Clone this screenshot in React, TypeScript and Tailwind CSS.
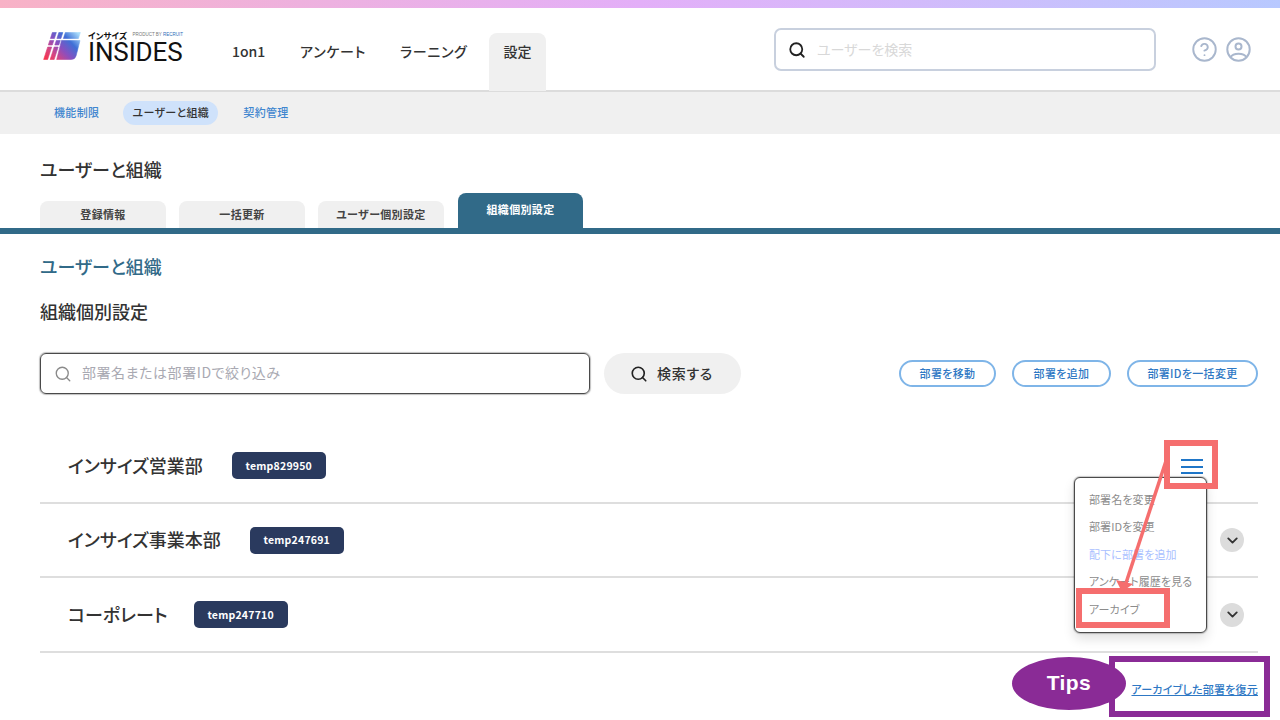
import React from "react";
import { Search, CircleHelp, ChevronDown } from "lucide-react";

const JP = "font-['Noto_Sans_CJK_JP','Noto_Sans',sans-serif] [font-feature-settings:'palt']";

function Logo() {
  const sl = (y: number) => 9 * (1 - y / 28);
  const quad = (a: number, b: number, y1: number, y2: number) =>
    `${a + sl(y1)},${y1} ${b + sl(y1)},${y1} ${b + sl(y2)},${y2} ${a + sl(y2)},${y2}`;
  return (
    <svg width="38" height="28" viewBox="0 0 38 28" className="shrink-0 mt-[1px]">
      <defs>
        <linearGradient id="lg" gradientUnits="userSpaceOnUse" x1="34" y1="0" x2="4" y2="28">
          <stop offset="0" stopColor="#a9dcfb" />
          <stop offset="0.28" stopColor="#3f6fd6" />
          <stop offset="0.55" stopColor="#8a4fbf" />
          <stop offset="0.8" stopColor="#d8457f" />
          <stop offset="1" stopColor="#f4344f" />
        </linearGradient>
      </defs>
      <g fill="url(#lg)" stroke="url(#lg)" strokeWidth="0.6" strokeLinejoin="round">
        <polygon points={quad(0.5, 4.5, 0.5, 6.5)} />
        <polygon points={quad(7, 11, 0.5, 6.5)} />
        <polygon points={quad(13.5, 28.5, 0.5, 6.5)} />
        <polygon points={quad(0.5, 4.5, 8.5, 13)} />
        <polygon points={quad(7, 11, 8.5, 13)} />
        <polygon points={quad(0.5, 4.5, 15, 27.5)} />
        <polygon points={quad(7, 11, 15, 27.5)} />
        <path d="M 18.5 8.5 L 37 8.5 L 33 24 Q 32 27.5 28 27.5 L 13.7 27.5 Z" />
      </g>
    </svg>
  );
}

function UserIcon() {
  return (
    <svg width="25" height="25" viewBox="0 0 25 25" fill="none" stroke="#a9b7cd" strokeWidth="2">
      <circle cx="12.5" cy="12.5" r="11.2" />
      <circle cx="12.5" cy="9.5" r="3" />
      <path d="M4.8 20 C 7 15.5, 18 15.5, 20.2 20" />
    </svg>
  );
}

function NavItem({ label, active, w }: { label: string; active?: boolean; w?: string }) {
  return (
    <div
      className={`flex whitespace-nowrap text-[14px] leading-[22px] font-medium text-[#333] h-[58px] pt-[7px] self-end ${
        active ? "w-[57px] justify-center bg-[#f0f0f0] rounded-t-[8px] ml-[-12px]" : w ?? ""
      }`}
    >
      {label}
    </div>
  );
}

function Tab({ label, active }: { label: string; active?: boolean }) {
  return (
    <div
      className={`flex items-center justify-center rounded-t-[8px] text-[11px] font-bold tracking-[0.03em] ${
        active ? "w-[125px] h-[35px] bg-[#316a88] text-white ml-[1px] pb-[3px]" : "w-[126px] h-[27px] bg-[#f0f0f0] text-[#444]"
      }`}
    >
      {label}
    </div>
  );
}

function Pill({ label, w }: { label: string; w: string }) {
  return (
    <div
      className={`${w} h-[27px] flex items-center justify-center rounded-full border-2 border-[#7fb5e8] bg-white text-[#2e78c4] text-[11px] font-medium tracking-[0.03em] pb-[1px]`}
    >
      {label}
    </div>
  );
}

function Row({ name, id, chevron, h, gap }: { name: string; id: string; chevron?: boolean; h: string; gap: string }) {
  return (
    <div className={`${h} border-b-2 border-[#dedede] flex items-center pl-[28px] pr-[14px]`}>
      <span className="text-[18px] leading-[26px] font-medium text-[#333] pb-[2px]">{name}</span>
      <span className={`${gap} w-[94px] h-[27px] flex items-center justify-center rounded-[5px] bg-[#2a3a5e] text-white text-[10.5px] font-bold tracking-[0.02em]`}>
        {id}
      </span>
      {chevron && (
        <span className="ml-auto w-[24px] h-[24px] rounded-full bg-[#dcdcdc] flex items-center justify-center">
          <ChevronDown size={17} strokeWidth={2.6} color="#333" />
        </span>
      )}
    </div>
  );
}

export default function App() {
  return (
    <div className={`relative w-[1280px] h-[720px] overflow-hidden bg-white ${JP}`}>
      <div className="h-[8px] bg-gradient-to-r from-[#f8b2c6] via-[#e3aff8] to-[#b8c9ff]" />

      <header className="h-[84px] border-b-2 border-[#dcdcdc] flex items-start pl-[43px]">
        <div className="flex items-start mt-[23px] gap-[7px]">
          <Logo />
          <div className="flex flex-col w-[96px]">
            <div className="flex items-center justify-between h-[9px]">
              <span className="text-[8.5px] font-bold text-[#111] leading-none">インサイズ</span>
              <span className="text-[4.5px] text-[#777] leading-none font-['Liberation_Sans',sans-serif] whitespace-nowrap mr-[1px]">
                PRODUCT BY <span className="text-[#2b6cb8]">RECRUIT</span>
              </span>
            </div>
            <span className="text-[26px] leading-[21px] mt-[2px] text-[#111] font-['Roboto',sans-serif] tracking-[-0.005em]">INSIDES</span>
          </div>
        </div>
        <nav className="flex h-[83px] gap-[34px] ml-[48px]">
          <NavItem label="1on1" w="w-[34px]" />
          <NavItem label="アンケート" w="w-[66px] tracking-[0.05em]" />
          <NavItem label="ラーニング" w="w-[67px] tracking-[0.05em]" />
          <NavItem label="設定" active />
        </nav>
        <div className="ml-[228px] mt-[20px] w-[382px] h-[43px] rounded-[7px] border-2 border-[#c8d0de] flex items-center pl-[12px] gap-[11px]">
          <Search size={18} strokeWidth={2.4} color="#222" />
          <span className="text-[14px] text-[#d8d8d8] pb-[1px]">ユーザーを検索</span>
        </div>
        <div className="flex items-center ml-[35px] mt-[28px] gap-[8px]">
          <CircleHelp size={27} strokeWidth={1.7} color="#a9b7cd" />
          <UserIcon />
        </div>
      </header>

      <div className="h-[42px] bg-[#f0f0f0] flex items-center pl-[54px] pb-[1px] text-[11px] font-medium tracking-[0.03em]">
        <span className="text-[#3f86cf]">機能制限</span>
        <span className="ml-[24px] w-[95px] h-[24px] rounded-full bg-[#cfe2fb] text-[#333] flex items-center justify-center">
          ユーザーと組織
        </span>
        <span className="ml-[25px] text-[#3f86cf]">契約管理</span>
      </div>

      <div className="h-[59px] pl-[40px] pt-[22px] text-[18px] leading-[26px] font-medium text-[#333]">ユーザーと組織</div>

      <div className="flex items-end gap-[13px] pl-[40px] border-b-[6px] border-[#316a88]">
        <Tab label="登録情報" />
        <Tab label="一括更新" />
        <Tab label="ユーザー個別設定" />
        <Tab label="組織個別設定" active />
      </div>

      <div className="px-[40px] pr-[22px]">
        <div className="pt-[19px] text-[18px] leading-[26px] font-medium text-[#316a88]">ユーザーと組織</div>
        <div className="pt-[19px] text-[18px] leading-[26px] font-medium text-[#333]">組織個別設定</div>

        <div className="flex items-center mt-[29px]">
          <div className="w-[550px] h-[41px] rounded-[6px] border border-[#4a4a4a] shadow-[0_0_1px_1px_rgba(0,0,0,0.25)] flex items-center pl-[13px] gap-[10px]">
            <Search size={18} strokeWidth={1.8} color="#8a8a8a" />
            <span className="text-[14px] tracking-[0.04em] text-[#a9a9b2] pb-[2px]">部署名または部署IDで絞り込み</span>
          </div>
          <div className="ml-[14px] w-[137px] h-[41px] rounded-full bg-[#f0f0f0] flex items-center justify-center gap-[9px] text-[14px] font-medium text-[#333] tracking-[0.05em] pr-[2px]">
            <Search size={18} strokeWidth={2.2} color="#222" />
            <span className="pb-[1px]">検索する</span>
          </div>
          <div className="ml-auto flex gap-[16px]">
            <Pill label="部署を移動" w="w-[97px]" />
            <Pill label="部署を追加" w="w-[99px]" />
            <Pill label="部署IDを一括変更" w="w-[131px]" />
          </div>
        </div>

        <div className="mt-[35px]">
          <Row name="インサイズ営業部" id="temp829950" h="h-[75px]" gap="ml-[29px]" />
          <Row name="インサイズ事業本部" id="temp247691" chevron h="h-[74px]" gap="ml-[29px]" />
          <Row name="コーポレート" id="temp247710" chevron h="h-[75px]" gap="ml-[26px]" />
        </div>
      </div>

      {/* hamburger */}
      <div className="absolute left-[1181px] top-[459px] w-[22px] h-[15px] flex flex-col justify-between">
        <span className="h-[2px] bg-[#1f76c8]" />
        <span className="h-[2px] bg-[#1f76c8]" />
        <span className="h-[2px] bg-[#1f76c8]" />
      </div>

      {/* menu */}
      <div className="absolute left-[1074px] top-[477px] w-[133px] h-[156px] bg-white rounded-[6px] border border-[#4a4a4a] shadow-[0_0_1px_1px_rgba(0,0,0,0.2),0_6px_12px_rgba(0,0,0,0.12)] flex flex-col pl-[14px] pt-[7px] text-[11px] text-[#8c8c8c] tracking-[0.01em]">
        <div className="h-[27.5px] flex items-center">部署名を変更</div>
        <div className="h-[27.5px] flex items-center">部署IDを変更</div>
        <div className="h-[27.5px] flex items-center text-[#a9c0ff]">配下に部署を追加</div>
        <div className="h-[27.5px] flex items-center">アンケート履歴を見る</div>
        <div className="h-[27.5px] flex items-center">アーカイブ</div>
      </div>

      {/* annotations */}
      <div className="absolute left-[1164px] top-[440px] w-[54px] h-[49px] border-[6px] border-[#f56e6e]" />
      <div className="absolute left-[1076px] top-[588px] w-[94px] h-[40px] border-[6px] border-[#f56e6e]" />
      <svg className="absolute left-[1100px] top-[455px]" width="80" height="145" viewBox="0 0 80 145">
        <line x1="66" y1="6" x2="26" y2="128" stroke="#f56e6e" strokeWidth="3.5" />
        <polygon points="22,137 16,125 33,129" fill="#f56e6e" />
      </svg>

      <div className="absolute left-[1109px] top-[656px] w-[161px] h-[61px] border-[6px] border-[#8a2b96] bg-white flex items-center justify-end pr-[6px] pt-[5px]">
        <span className="text-[11px] font-medium tracking-[0.02em] text-[#2e78c4] underline whitespace-nowrap">アーカイブした部署を復元</span>
      </div>
      <div className="absolute left-[1012px] top-[657px] w-[114px] h-[53px] rounded-[50%] bg-[#8a2b96] flex items-center justify-center pb-[2px] text-white text-[21px] font-bold font-['Liberation_Sans',sans-serif] tracking-[0.02em]">
        Tips
      </div>
    </div>
  );
}
